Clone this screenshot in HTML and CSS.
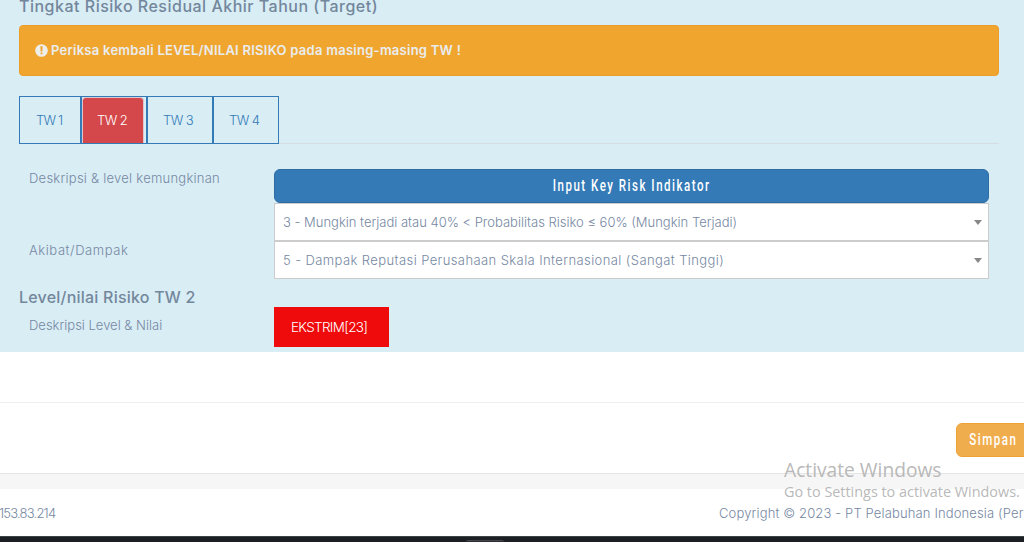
FILE: index.html
```html
<!DOCTYPE html>
<html lang="id">
<head>
<meta charset="utf-8">
<title>Tingkat Risiko Residual</title>
<link rel="stylesheet" href="styles.css">
</head>
<body>
<main class="panel">
  <h4 class="title title-main"><span>Tingkat Risiko Residual Akhir Tahun (Target)</span></h4>
  <div class="alert">
    <svg class="alert-icon" viewBox="0 0 13 13"><circle cx="6.5" cy="6.5" r="6.3" fill="#eeeeea"/><path d="M5.3 2.3h2.4l-.35 5.1h-1.7zM5.6 8.5h1.8v1.8H5.6z" fill="#efa52f"/></svg>
    <span class="alert-text">Periksa kembali LEVEL/NILAI RISIKO pada masing-masing TW !</span>
  </div>
  <ul class="tabs">
    <li class="tab tab-first"><a>TW 1</a></li>
    <li class="tab active"><a>TW 2</a></li>
    <li class="tab"><a>TW 3</a></li>
    <li class="tab"><a>TW 4</a></li>
  </ul>
  <div class="fields">
    <div class="label"><span class="t-desc">Deskripsi &amp; level kemungkinan</span></div>
    <div class="control">
      <button class="btn btn-primary"><span class="btn-text t-input">Input Key Risk Indikator</span></button>
      <div class="select"><span class="t-sel1">3 - Mungkin terjadi atau 40% &lt; Probabilitas Risiko ≤ 60% (Mungkin Terjadi)</span><i class="caret"></i></div>
    </div>
    <div class="label"><span class="t-akibat">Akibat/Dampak</span></div>
    <div class="control">
      <div class="select"><span class="t-sel2">5 - Dampak Reputasi Perusahaan Skala Internasional (Sangat Tinggi)</span><i class="caret"></i></div>
    </div>
  </div>
  <h4 class="title title-level"><span>Level/nilai Risiko TW 2</span></h4>
  <div class="result">
    <div class="label"><span class="t-level">Deskripsi Level &amp; Nilai</span></div>
    <div class="badge"><span>EKSTRIM[23]</span></div>
  </div>
</main>
<section class="actions">
  <button class="btn btn-warning"><span class="btn-text t-save">Simpan</span></button>
</section>
<div class="band"></div>
<footer class="footer">
  <span class="t-ip">153.83.214</span>
  <span class="t-copy">Copyright © 2023 - PT Pelabuhan Indonesia (Per</span>
</footer>
<div class="taskbar"><div class="taskbar-item"></div></div>
<aside class="watermark"><div class="wm-title">Activate Windows</div><div class="wm-sub">Go to Settings to activate Windows.</div></aside>
</body>
</html>
```

FILE: styles.css
```css
* { box-sizing: border-box; }
body {
  margin: 0;
  width: 1024px;
  height: 542px;
  overflow: hidden;
  position: relative;
  background: #fff;
  color: #7688a3;
  font: 300 13px/20px Inter, sans-serif;
  white-space: nowrap;
}
.panel { height: 352px; padding: 0 25px 0 19px; background: #d9edf5; overflow: hidden; }
.title { margin: 0; font-size: 16px; font-weight: 500; color: #73879c; }
.title-main { height: 25px; line-height: 12px; letter-spacing: .5px; }
.alert {
  display: flex;
  align-items: center;
  height: 51px;
  padding: 0 15px;
  background: #f0a52f;
  border: 1px solid #eb9e28;
  border-radius: 4px;
  color: #e9edef;
  font-weight: 600;
}
.alert-icon { width: 13px; height: 13px; margin-right: 3px; margin-top: -1px; }
.alert-text { letter-spacing: .26px; margin-top: -1px; }
.tabs {
  display: flex;
  height: 48px;
  margin: 20px 0 0;
  padding: 0;
  list-style: none;
  border-bottom: 1px solid #d5dce2;
}
.tab { width: 66px; height: 48px; border: 1px solid #337ab7; padding: 0 2px 0 0; color: #337ab7; }
.tab-first { width: 62px; }
.tab a { display: block; height: 46px; padding: 13px 0 0 15px; font-weight: 350; letter-spacing: -.55px; }
.tab-first a { padding-left: 16px; letter-spacing: -.7px; word-spacing: -.5px; }
.tab.active a { background: #d4474a; border: 1px solid #dcc7ce; border-bottom: 0; border-radius: 4px 4px 0 0; color: #fff; padding: 12px 0 0 14px; }
.fields { display: grid; grid-template-columns: 255px 715px; grid-template-rows: 72px 38px; margin-top: 25px; }
.fields .label { line-height: 18px; }
.label { padding-left: 10px; }
.t-desc { letter-spacing: .25px; }
.t-akibat { letter-spacing: .57px; }
.t-sel2 { letter-spacing: .41px; }
.btn {
  display: flex;
  justify-content: center;
  align-items: center;
  height: 34px;
  padding: 0 0 1px;
  border: 1px solid #2e6da4;
  border-radius: 6px;
  background: #337ab7;
  color: #fff;
  font: 500 16px/20px Roboto, sans-serif;
}
.btn-primary { width: 715px; }
.btn-text { transform: scaleX(.72); letter-spacing: 2.1px; }
.select {
  display: flex;
  justify-content: space-between;
  align-items: center;
  height: 38px;
  padding: 0 6px 0 8px;
  background: #fff;
  border: 1px solid #ccc;
}
.caret { border: 4px solid transparent; border-top: 5px solid #888; border-bottom: 0; }
.title-level { height: 28px; line-height: 36px; letter-spacing: .22px; }
.result { display: grid; grid-template-columns: 255px 115px; }
.result .label { padding-top: 8px; }
.badge { height: 40px; background: #ef0b0b; color: #fff; font-size: 13.5px; font-weight: 350; line-height: 40px; padding-left: 17px; letter-spacing: -.7px; }
.actions { display: flex; justify-content: flex-end; height: 71px; margin-top: 50px; padding-top: 20px; border-top: 1px solid #eee; }
.btn-warning { width: 74px; flex: none; margin-right: -6px; background: #f0ad4e; border-color: #eea236; }
.band { height: 16px; background: #f6f6f6; border-top: 1px solid #e5e5e5; }
.footer { display: flex; height: 47px; line-height: 48px; overflow: hidden; }
.t-ip { flex: none; width: 720px; margin-left: -1px; letter-spacing: -.8px; }
.t-copy { letter-spacing: .14px; }
.taskbar { height: 6px; background: #1c1f24; border-top: 1px solid #3c4442; padding: 3px 0 0 466px; }
.taskbar-item { width: 38px; height: 2px; background: #2b2d30; border-top: 1px solid #45474a; border-radius: 3px 3px 0 0; }
.watermark { position: absolute; left: 784px; top: 457px; color: #b9b9b9; font-family: "Open Sans", "Noto Sans", sans-serif; font-weight: 400; }
.wm-title { font-size: 19.2px; line-height: 25px; }
.wm-sub { font-size: 14.4px; line-height: 20px; }
```
